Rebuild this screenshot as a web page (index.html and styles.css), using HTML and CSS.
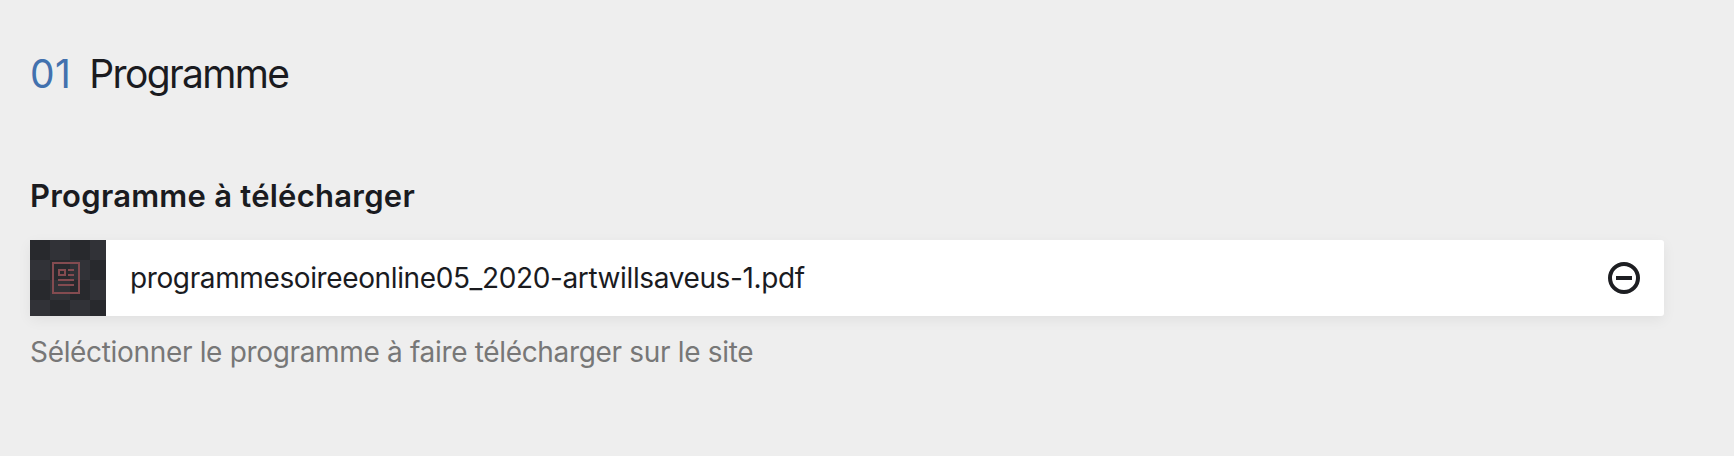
FILE: index.html
```html
<!DOCTYPE html>
<html lang="fr">
<head>
<meta charset="utf-8">
<title>Programme</title>
<link rel="stylesheet" href="styles.css">
</head>
<body>
<main class="panel">
<h2 class="headline"><span class="number">01</span><span class="title">Programme</span></h2>
<label class="label"><span class="labeltext">Programme à télécharger</span></label>
<div class="item">
<div class="thumb">
<svg class="document" width="28" height="32" viewBox="0 0 28 32" fill="none" stroke="#844b50" stroke-width="2"><path d="M1 1h26v30H1zM7 8h6v5H7zM16 8h6M16 13h6M6 18h16M6 23h16"/></svg>
</div>
<span class="filename">programmesoireeonline05_2020-artwillsaveus-1.pdf</span>
<button class="remove" aria-label="Supprimer"><svg width="32" height="32" viewBox="0 0 32 32" fill="none" stroke="#1d1e22" stroke-width="4"><circle cx="16" cy="16" r="14"/><path d="M8 16h16"/></svg></button>
</div>
<p class="help"><span class="helptext">Séléctionner le programme à faire télécharger sur le site</span></p>
</main>
</body>
</html>
```
FILE: styles.css
```css
* { box-sizing: border-box; }
body { margin: 0; background: #eee; color: #1a1b1f; font-family: Inter, sans-serif; }
.panel { height: 456px; padding: 49px 70px 0 30px; overflow: hidden; }
.headline { display: flex; gap: 18px; margin: 0; height: 50px; line-height: 50px; font-size: 39px; font-weight: 400; }
.number { color: #4271ae; letter-spacing: .4px; }
.title { letter-spacing: -1.65px; }
.label { display: block; margin-top: 77px; height: 40px; line-height: 40px; font-size: 31px; font-weight: 600; letter-spacing: .25px; }
.item { display: flex; align-items: center; margin-top: 24px; height: 76px; background: #fff; border-radius: 0 3px 3px 0; box-shadow: 0 4px 14px rgba(0,0,0,.06); }
.thumb { display: flex; align-items: center; justify-content: center; width: 76px; height: 76px; background: #28292d repeating-conic-gradient(#313237 0 25%, #28292d 0 50%) 0 0 / 40px 40px; }
.document { margin-right: 4px; }
.filename { margin-left: 24px; font-size: 28px; line-height: 40px; letter-spacing: -.38px; }
.remove { display: flex; margin-left: auto; margin-right: 24px; padding: 0; border: 0; background: none; }
.help { margin: 16px 0 0; font-size: 28px; line-height: 40px; letter-spacing: -.33px; color: #777; }
```
